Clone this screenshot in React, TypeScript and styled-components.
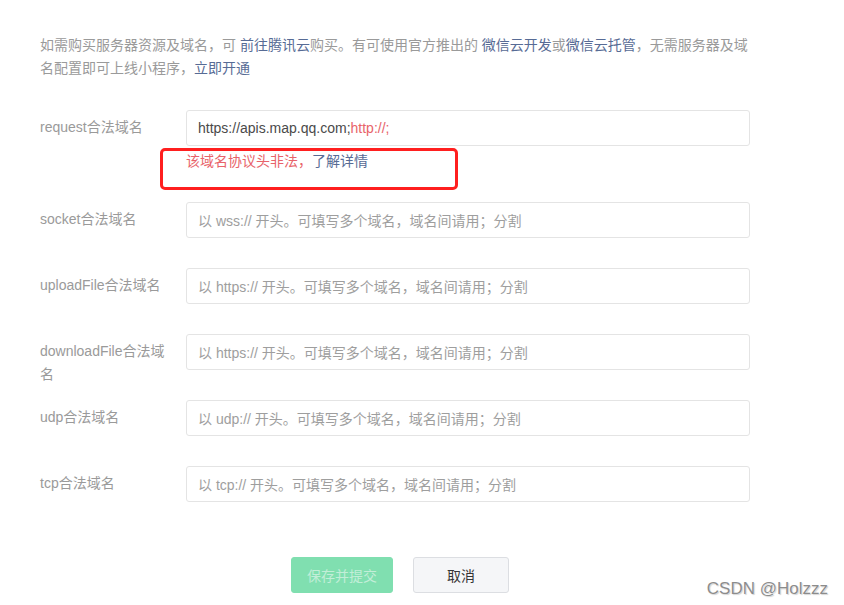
import React from "react";
import styled, { createGlobalStyle } from "styled-components";

const GlobalStyle = createGlobalStyle`
  html, body {
    margin: 0;
    padding: 0;
    background: #ffffff;
  }
  body {
    font-family: "Liberation Sans", "Noto Sans CJK SC", sans-serif;
    font-size: 14px;
    color: #353535;
  }
`;

const Page = styled.div`
  position: relative;
  width: 844px;
  height: 605px;
  padding: 34px 0 0 40px;
  box-sizing: border-box;
  overflow: hidden;
`;

const Intro = styled.p`
  margin: 0;
  width: 716px;
  line-height: 23px;
  color: #9a9a9a;
`;

const LinkText = styled.a`
  color: #576b95;
  text-decoration: none;
  cursor: pointer;
`;

const Form = styled.div`
  margin-top: 30px;
  width: 720px;
  display: flex;
  flex-direction: column;
  gap: 30px;
`;

const Row = styled.div`
  position: relative;
  display: flex;
  align-items: flex-start;
`;

// label may wrap onto a second line without pushing the row taller
const Label = styled.div`
  width: 130px;
  height: 36px;
  box-sizing: border-box;
  margin-right: 16px;
  padding-top: 6px;
  line-height: 23px;
  color: #9a9a9a;
  word-break: break-all;
  overflow: visible;
`;

const Control = styled.div`
  flex: 0 0 564px;
  display: flex;
  flex-direction: column;
`;

const FieldBox = styled.div`
  height: 36px;
  box-sizing: border-box;
  border: 1px solid #e4e4e4;
  border-radius: 3px;
  padding: 0 11px;
  display: flex;
  align-items: center;
  white-space: nowrap;
  color: #4a4a4a;
`;

const Placeholder = styled.span`
  color: #9e9e9e;
`;

const Invalid = styled.span`
  color: #e8636a;
`;

const ErrorText = styled.div`
  margin-top: 4px;
  line-height: 22px;
  color: #e8636a;
`;

const Marker = styled.div`
  position: absolute;
  left: 120px;
  top: 38px;
  width: 298px;
  height: 42px;
  box-sizing: border-box;
  border: 3px solid #ff1f1f;
  border-radius: 5px;
  pointer-events: none;
`;

const Actions = styled.div`
  margin-top: 55px;
  width: 720px;
  display: flex;
  justify-content: center;
  gap: 20px;
`;

const Button = styled.button<{ $primary?: boolean }>`
  height: 36px;
  width: ${(p) => (p.$primary ? "102px" : "96px")};
  box-sizing: border-box;
  border-radius: 3px;
  font-family: inherit;
  font-size: 14px;
  border: 1px solid ${(p) => (p.$primary ? "#80dfb0" : "#dcdee2")};
  background: ${(p) => (p.$primary ? "#80dfb0" : "#f5f6f8")};
  color: ${(p) => (p.$primary ? "#c2eed8" : "#353535")};
  cursor: ${(p) => (p.$primary ? "not-allowed" : "pointer")};
`;

const Watermark = styled.div`
  position: absolute;
  right: 16px;
  bottom: 6px;
  font-family: "Liberation Sans", sans-serif;
  font-size: 17px;
  color: #8c8c8c;
  text-shadow: 0 0 1px #ffffff, 1px 1px 1px #d0d0d0;
`;

const fields = [
  { label: "socket合法域名", hint: "以 wss:// 开头。可填写多个域名，域名间请用；分割" },
  { label: "uploadFile合法域名", hint: "以 https:// 开头。可填写多个域名，域名间请用；分割" },
  { label: "downloadFile合法域名", hint: "以 https:// 开头。可填写多个域名，域名间请用；分割" },
  { label: "udp合法域名", hint: "以 udp:// 开头。可填写多个域名，域名间请用；分割" },
  { label: "tcp合法域名", hint: "以 tcp:// 开头。可填写多个域名，域名间请用；分割" },
];

const App = () => {
  return (
    <Page>
      <GlobalStyle />
      <Intro>
        如需购买服务器资源及域名，可 <LinkText>前往腾讯云</LinkText>购买。有可使用官方推出的{" "}
        <LinkText>微信云开发</LinkText>或<LinkText>微信云托管</LinkText>，无需服务器及域名配置即可上线小程序，
        <LinkText>立即开通</LinkText>
      </Intro>

      <Form>
        <Row>
          <Label>request合法域名</Label>
          <Control>
            <FieldBox>
              https://apis.map.qq.com;<Invalid>http://;</Invalid>
            </FieldBox>
            <ErrorText>
              该域名协议头非法，<LinkText>了解详情</LinkText>
            </ErrorText>
          </Control>
          <Marker />
        </Row>
        {fields.map((f) => (
          <Row key={f.label}>
            <Label>{f.label}</Label>
            <Control>
              <FieldBox>
                <Placeholder>{f.hint}</Placeholder>
              </FieldBox>
            </Control>
          </Row>
        ))}
      </Form>

      <Actions>
        <Button $primary>保存并提交</Button>
        <Button>取消</Button>
      </Actions>

      <Watermark>CSDN @Holzzz</Watermark>
    </Page>
  );
};

export default App;
